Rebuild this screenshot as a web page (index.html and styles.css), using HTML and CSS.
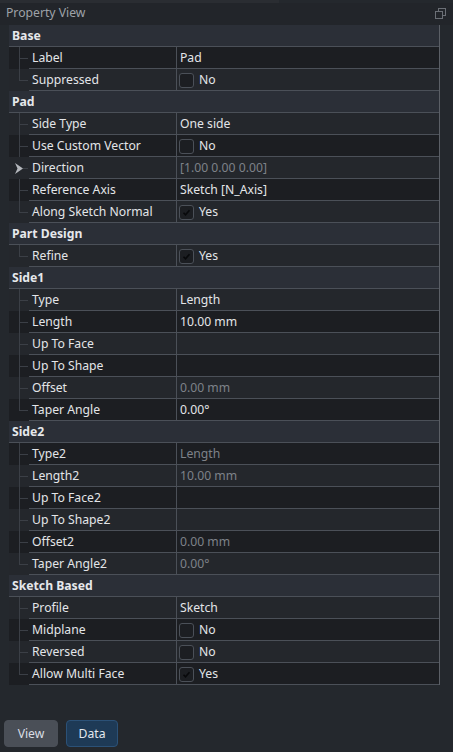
FILE: index.html
```html
<!DOCTYPE html>
<html>
<head>
<meta charset="utf-8">
<link rel="stylesheet" href="styles.css">
</head>
<body>
<div class="panel">
  <div class="topstrip"></div>
  <div class="titlebar">
    <span class="title">Property View</span>
    <svg class="undock" width="11" height="11" viewBox="0 0 11 11"><rect x="3.5" y="0.5" width="7" height="7" fill="none" stroke="#6b6f76"/><rect x="0.5" y="3.5" width="7" height="7" fill="#22252a" stroke="#6b6f76"/></svg>
  </div>
  <div class="tree">
    <div class="group">Base</div>
    <div class="row dark"><div class="ind first"></div><div class="name">Label</div><div class="val">Pad</div></div>
    <div class="row light"><div class="ind last"></div><div class="name">Suppressed</div><div class="val"><span class="cb"></span>No</div></div>

    <div class="group">Pad</div>
    <div class="row light"><div class="ind first"></div><div class="name">Side Type</div><div class="val">One side</div></div>
    <div class="row dark"><div class="ind"></div><div class="name">Use Custom Vector</div><div class="val"><span class="cb"></span>No</div></div>
    <div class="row light"><div class="ind arrow"><svg width="8" height="11" viewBox="0 0 8 11"><path d="M0 0 L8 5.5 L0 11 L2.5 5.5 Z" fill="#b4b7bc"/></svg></div><div class="name">Direction</div><div class="val dim">[1.00 0.00 0.00]</div></div>
    <div class="row dark"><div class="ind"></div><div class="name">Reference Axis</div><div class="val">Sketch [N_Axis]</div></div>
    <div class="row light"><div class="ind last"></div><div class="name">Along Sketch Normal</div><div class="val"><span class="cb on"><svg width="13" height="13" viewBox="0 0 13 13"><path d="M3.5 6.8 L5.5 8.8 L9.5 4.2" fill="none" stroke="#08090b" stroke-width="1.6"/></svg></span>Yes</div></div>

    <div class="group">Part Design</div>
    <div class="row light"><div class="ind only"></div><div class="name">Refine</div><div class="val"><span class="cb on"><svg width="13" height="13" viewBox="0 0 13 13"><path d="M3.5 6.8 L5.5 8.8 L9.5 4.2" fill="none" stroke="#08090b" stroke-width="1.6"/></svg></span>Yes</div></div>

    <div class="group">Side1</div>
    <div class="row light"><div class="ind first"></div><div class="name">Type</div><div class="val">Length</div></div>
    <div class="row dark"><div class="ind"></div><div class="name">Length</div><div class="val">10.00 mm</div></div>
    <div class="row light"><div class="ind"></div><div class="name">Up To Face</div><div class="val"></div></div>
    <div class="row dark"><div class="ind"></div><div class="name">Up To Shape</div><div class="val"></div></div>
    <div class="row light"><div class="ind"></div><div class="name">Offset</div><div class="val dim">0.00 mm</div></div>
    <div class="row dark"><div class="ind last"></div><div class="name">Taper Angle</div><div class="val">0.00°</div></div>

    <div class="group">Side2</div>
    <div class="row dark"><div class="ind first"></div><div class="name">Type2</div><div class="val dim">Length</div></div>
    <div class="row light"><div class="ind"></div><div class="name">Length2</div><div class="val dim">10.00 mm</div></div>
    <div class="row dark"><div class="ind"></div><div class="name">Up To Face2</div><div class="val"></div></div>
    <div class="row light"><div class="ind"></div><div class="name">Up To Shape2</div><div class="val"></div></div>
    <div class="row dark"><div class="ind"></div><div class="name">Offset2</div><div class="val dim">0.00 mm</div></div>
    <div class="row light"><div class="ind last"></div><div class="name">Taper Angle2</div><div class="val dim">0.00°</div></div>

    <div class="group">Sketch Based</div>
    <div class="row light"><div class="ind first"></div><div class="name">Profile</div><div class="val">Sketch</div></div>
    <div class="row dark"><div class="ind"></div><div class="name">Midplane</div><div class="val"><span class="cb"></span>No</div></div>
    <div class="row light"><div class="ind"></div><div class="name">Reversed</div><div class="val"><span class="cb"></span>No</div></div>
    <div class="row dark"><div class="ind last"></div><div class="name">Allow Multi Face</div><div class="val"><span class="cb on"><svg width="13" height="13" viewBox="0 0 13 13"><path d="M3.5 6.8 L5.5 8.8 L9.5 4.2" fill="none" stroke="#08090b" stroke-width="1.6"/></svg></span>Yes</div></div>
  </div>
  <div class="footer">
    <button class="btn view">View</button>
    <button class="btn data">Data</button>
  </div>
</div>
</body>
</html>
```
FILE: styles.css
```css
html, body {
  margin: 0;
  padding: 0;
  background: #24282d;
}
body {
  font-family: "Noto Sans", "Open Sans", sans-serif;
  font-size: 12.2px;
  color: #e3e5e8;
}
.panel {
  width: 453px;
  height: 752px;
  display: flex;
  flex-direction: column;
  background: #24282d;
}
.topstrip {
  height: 3px;
  width: 279px;
  background: #2a2d32;
}
.titlebar {
  height: 22px;
  display: flex;
  align-items: center;
  justify-content: space-between;
  padding: 0 8px 0 6px;
  background: #22252a;
}
.title {
  color: #9ea2a8;
  font-size: 12.2px;
  line-height: 18px;
  margin-top: -2px;
}
.undock {
  margin-top: -2px;
  margin-right: -1px;
}
.tree {
  margin-left: 9px;
  width: 430px;
  border-right: 1px solid #5b5f66;
  background: #24282d;
}
.group {
  height: 20px;
  padding-top: 1px;
  line-height: 20px;
  padding-left: 3px;
  font-weight: bold;
  background: #2b2f37;
  border-bottom: 1px solid #4b5058;
  color: #e6e8eb;
}
.row {
  display: flex;
  height: 22px;
}
.row.dark { background: #1c1e22; }
.row.light { background: #24272c; }
.ind {
  width: 20px;
  flex: none;
  background:
    linear-gradient(#3b3f46, #3b3f46) 10px 0 / 1px 100% no-repeat,
    linear-gradient(#3b3f46, #3b3f46) 11px 11px / 8px 1px no-repeat;
}
.ind.last, .ind.only {
  background:
    linear-gradient(#3b3f46, #3b3f46) 10px 0 / 1px 12px no-repeat,
    linear-gradient(#3b3f46, #3b3f46) 11px 11px / 8px 1px no-repeat;
}
.ind.arrow {
  display: flex;
  align-items: center;
  padding-left: 6px;
  padding-top: 1px;
  box-sizing: border-box;
  background:
    linear-gradient(#3b3f46, #3b3f46) 14px 11px / 5px 1px no-repeat;
}
.name {
  width: 144px;
  flex: none;
  padding-left: 3px;
  padding-top: 1px;
  line-height: 20px;
  height: 20px;
  border-right: 1px solid #4b5058;
  border-bottom: 1px solid #4b5058;
  white-space: nowrap;
}
.val {
  flex: 1;
  padding-left: 3px;
  padding-top: 1px;
  line-height: 20px;
  height: 20px;
  border-bottom: 1px solid #4b5058;
  display: flex;
  align-items: center;
  white-space: nowrap;
}
.val.dim {
  color: #7e8289;
}
.cb {
  width: 13px;
  height: 13px;
  border: 1px solid #4b5058;
  border-radius: 3px;
  background: #1c1e22;
  margin-left: -1px;
  margin-right: 5px;
  display: inline-flex;
  flex: none;
}
.footer {
  margin-top: auto;
  padding: 0 0 5px 4px;
  display: flex;
  gap: 8px;
}
.btn {
  height: 27px;
  font-family: "Noto Sans", "Open Sans", sans-serif;
  font-size: 12.2px;
  border-radius: 4px;
  padding: 0;
  cursor: pointer;
}
.btn.view {
  width: 54px;
  background: #4a4f57;
  border: 1px solid #4a4f57;
  color: #d9dde3;
}
.btn.data {
  width: 52px;
  background: #1e3a56;
  border: 1px solid #2b5177;
  color: #e3e8ee;
}
```
